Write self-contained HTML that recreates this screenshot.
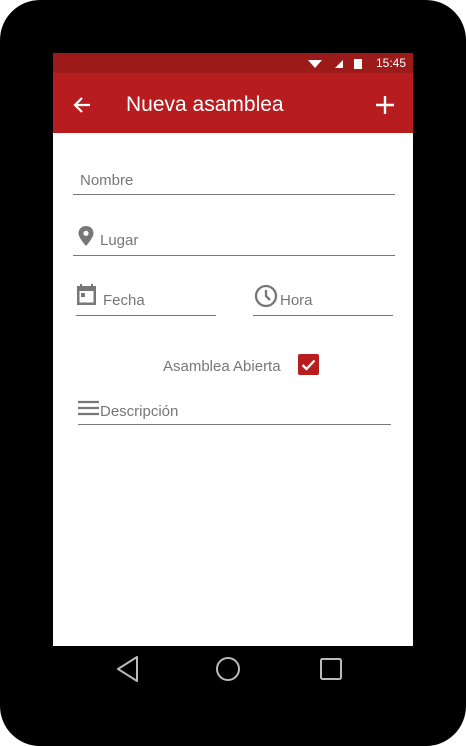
<!DOCTYPE html>
<html><head><style>
body{margin:0;width:466px;height:746px;background:#fff;position:relative;overflow:hidden;font-family:"Liberation Sans",sans-serif}
.ph{position:absolute;left:0;top:0;width:466px;height:746px;background:#000;border-radius:40px}
.a{position:absolute}
.t{position:absolute;color:#777;font-size:15px}
.l{position:absolute;height:1px;background:#777}
</style></head><body>
<div class="ph"></div>
<div class="a" style="left:53px;top:53px;width:360px;height:593px;background:#fff"></div>
<div class="a" style="left:53px;top:53px;width:360px;height:20px;background:#9d1a1b"></div>
<div class="a" style="left:53px;top:73px;width:360px;height:60px;background:#b71c1e"></div>
<svg class="a" style="left:305px;top:56px" width="80" height="14">
<path d="M3 4 L17 4 L10 12 Z" fill="#fff"/>
<path d="M30 12 L38 4 L38 12 Z" fill="#fff"/>
<rect x="49" y="3" width="8" height="10" fill="#fff"/>
</svg>
<div class="a" style="left:376px;top:56px;color:#fff;font-size:12px">15:45</div>
<svg class="a" style="left:70px;top:93px" width="24" height="24"><path d="M20 12H5M12 5L5 12L12 19" stroke="#fff" stroke-width="2.2" fill="none"/></svg>
<div class="a" style="left:126px;top:93px;color:#fff;font-size:21px">Nueva asamblea</div>
<svg class="a" style="left:374px;top:94px" width="22" height="22"><path d="M11 2V20M2 11H20" stroke="#fff" stroke-width="2.4"/></svg>

<div class="t" style="left:80px;top:172px">Nombre</div>
<div class="l" style="left:73px;top:194px;width:322px"></div>

<svg class="a" style="left:77px;top:225px" width="18" height="24"><path d="M9 1C4.5 1 1.5 4.3 1.5 8.3 1.5 13 9 21 9 21S16.5 13 16.5 8.3C16.5 4.3 13.5 1 9 1Z" fill="#777"/><circle cx="9" cy="8.3" r="2.6" fill="#fff"/></svg>
<div class="t" style="left:100px;top:232px">Lugar</div>
<div class="l" style="left:73px;top:255px;width:322px"></div>

<svg class="a" style="left:76px;top:283px" width="22" height="24"><rect x="1" y="3" width="19" height="19" fill="#777"/><rect x="3.5" y="8" width="14" height="11.5" fill="#fff"/><rect x="5" y="10" width="4" height="4" fill="#777"/><rect x="4" y="1" width="2" height="4" fill="#777"/><rect x="15" y="1" width="2" height="4" fill="#777"/></svg>
<div class="t" style="left:103px;top:292px">Fecha</div>
<div class="l" style="left:76px;top:315px;width:140px"></div>

<svg class="a" style="left:254px;top:284px" width="26" height="26"><circle cx="12" cy="12" r="10" stroke="#777" stroke-width="2.3" fill="none"/><path d="M12 6V12L16 16" stroke="#777" stroke-width="2.3" fill="none"/></svg>
<div class="t" style="left:280px;top:292px">Hora</div>
<div class="l" style="left:253px;top:315px;width:140px"></div>

<div class="t" style="left:163px;top:358px">Asamblea Abierta</div>
<div class="a" style="left:298px;top:354px;width:21px;height:21px;background:#b71c1e;border-radius:2px"></div>
<svg class="a" style="left:298px;top:354px" width="21" height="21"><path d="M4.5 11L8.5 15L16.5 6.5" stroke="#fff" stroke-width="2.3" fill="none"/></svg>

<svg class="a" style="left:78px;top:400px" width="22" height="16"><path d="M0 2H21M0 8H21M0 14H21" stroke="#777" stroke-width="2.2"/></svg>
<div class="t" style="left:100px;top:403px">Descripción</div>
<div class="l" style="left:78px;top:424px;width:313px"></div>

<svg class="a" style="left:53px;top:646px" width="360" height="50">
<path d="M65 23 L84 11 L84 35 Z" stroke="#bbb" stroke-width="2" fill="none" stroke-linejoin="round"/>
<circle cx="175" cy="23" r="11" stroke="#bbb" stroke-width="2" fill="none"/>
<rect x="268" y="13" width="20" height="20" rx="1.5" stroke="#bbb" stroke-width="2" fill="none"/>
</svg>
</body></html>
